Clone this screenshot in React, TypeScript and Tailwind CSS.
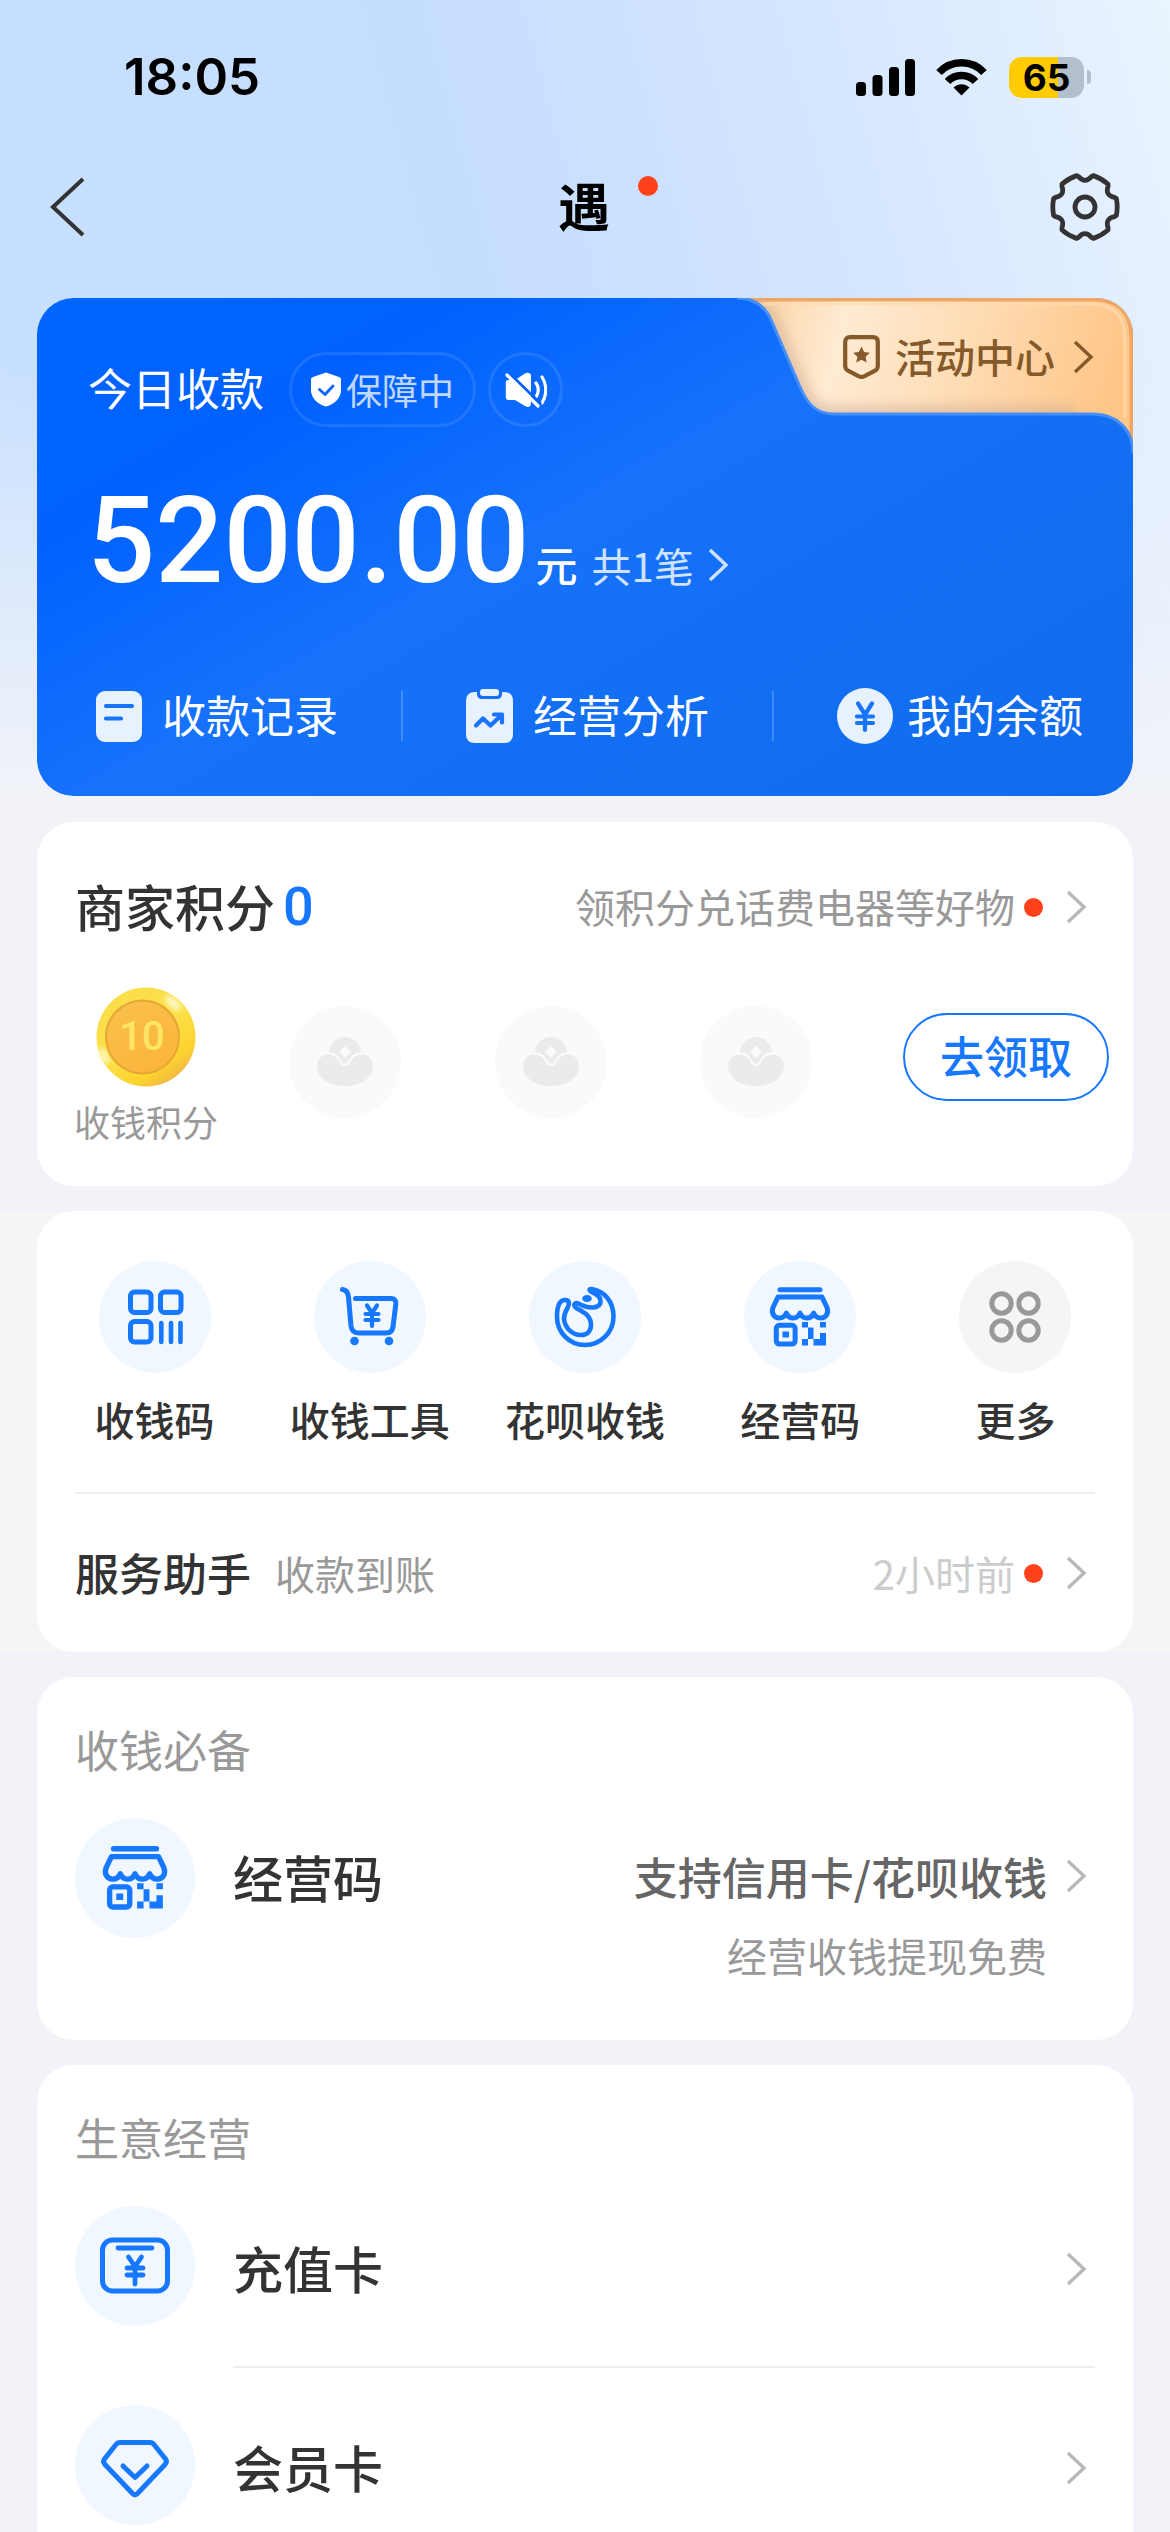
import React from "react";

type IconProps = { className?: string };

const Chevron = ({ className = "text-[#b8b8b8]" }: IconProps) => (
  <svg className={`h-[34px] w-[21px] shrink-0 ${className}`} viewBox="0 0 21 34" fill="none" aria-hidden="true">
    <path d="M2 2L18 17L2 32" stroke="currentColor" strokeWidth="3.4" />
  </svg>
);

const RedDot = () => <span className="size-[19px] shrink-0 rounded-full bg-[#ff411c]" />;

const SignalIcon = () => (
  <svg className="h-[38px] w-[60px]" viewBox="0 0 60 38" aria-label="信号">
    <rect x="0" y="24" width="10" height="14" rx="3.5" />
    <rect x="16.5" y="17" width="10" height="21" rx="3.5" />
    <rect x="33" y="9" width="10" height="29" rx="3.5" />
    <rect x="49" y="1" width="10" height="37" rx="3.5" />
  </svg>
);

const WifiIcon = () => (
  <svg className="h-[38px] w-[51px]" viewBox="0 0 51 38" fill="none" aria-label="无线网络">
    <path d="M3 14.5C15 1.5 36 1.5 48 14.5" stroke="#000" strokeWidth="7.6" />
    <path d="M11.5 23.5C19 15.5 32 15.5 39.5 23.5" stroke="#000" strokeWidth="7.6" />
    <path d="M25.5 37.5L17.5 29.5C22 25 29 25 33.5 29.5Z" fill="#000" />
  </svg>
);

const gearPath = (() => {
  const pt = (r: number, deg: number) => {
    const a = (deg * Math.PI) / 180;
    return `${(35 + r * Math.cos(a)).toFixed(2)} ${(35 + r * Math.sin(a)).toFixed(2)}`;
  };
  let d = `M${pt(32.5, -15)}`;
  for (let k = 0; k < 6; k++) {
    const a = k * 60;
    d += `Q${pt(33, a)} ${pt(32.5, a + 15)}L${pt(31, a + 18)}Q${pt(23, a + 30)} ${pt(31, a + 42)}L${pt(32.5, a + 45)}`;
  }
  return d + "Z";
})();

const GearIcon = () => (
  <svg className="size-[70px]" viewBox="0 0 70 70" fill="none" stroke="#333" strokeWidth="4.8" strokeLinejoin="round" aria-hidden="true">
    <path d={gearPath} />
    <circle cx="35" cy="35" r="10" />
  </svg>
);

const ShieldCheck = () => (
  <svg className="h-[35px] w-[30px]" viewBox="0 0 30 35" fill="none" aria-hidden="true">
    <path d="M15 0.5L28 5C29.4 5.5 30 6.2 30 7.5V18C30 26 24 32 15 34.5C6 32 0 26 0 18V7.5C0 6.2 .6 5.500 2 5Z" fill="#fff" />
    <path d="M8.500 17.500L14 22.500L22 14" stroke="#1066ff" strokeWidth="3" strokeLinecap="round" strokeLinejoin="round" />
  </svg>
);

const MutedIcon = () => (
  <svg className="h-[36px] w-[42px]" viewBox="0 0 42 36" fill="none" aria-hidden="true">
    <path d="M3 8H10L20 1.500C23 0 26 1 26 4V31C26 35 23 36 20 34L10 28H3.500Q.8 28 .8 25V10Q.8 8 3 8Z" fill="#fff" />
    <path d="M31 11C34 15 34 21 31 25M37 5C42 13 42 23 37 31" stroke="#fff" strokeWidth="3.200" strokeLinecap="round" />
    <path d="M4 1L36 32" stroke="#0863ff" strokeWidth="3" />
    <path d="M2 3L33 34" stroke="#fff" strokeWidth="3.200" strokeLinecap="round" />
  </svg>
);

const BadgeIcon = () => (
  <svg className="h-[44px] w-[37px]" viewBox="0 0 37 44" fill="none" aria-hidden="true">
    <path d="M7 2.200H30Q34.800 2.200 34.800 7V31Q34.800 34 32 35.700L21.500 41.200Q18.500 42.700 15.500 41.200L5 35.700Q2.200 34 2.200 31V7Q2.200 2.200 7 2.200Z" stroke="#855a2b" strokeWidth="4.200" />
    <path d="M18.500 11.500L21.100 17L26.800 17.700L22.600 21.700L23.700 27.600L18.500 24.700L13.300 27.600L14.400 21.700L10.200 17.700L15.900 17Z" fill="#855a2b" />
  </svg>
);

const RecordIcon = () => (
  <svg className="h-[51px] w-[46px]" viewBox="0 0 46 51" fill="none" aria-hidden="true">
    <rect width="46" height="51" rx="9" fill="#e8f2ff" />
    <path d="M10 15H36M10 27.500H25" stroke="#1874f8" strokeWidth="4.200" strokeLinecap="round" />
  </svg>
);

const AnalysisIcon = () => (
  <svg className="h-[54px] w-[47px]" viewBox="0 0 47 54" fill="none" aria-hidden="true">
    <path d="M9 3H11V5Q11 10 16 10H31Q36 10 36 5V3H38Q47 3 47 12V45Q47 54 38 54H9Q0 54 0 45V12Q0 3 9 3Z" fill="#e8f2ff" />
    <rect x="14" y="0" width="19" height="7" rx="3" fill="#e8f2ff" />
    <path d="M10 36.500L17 29.500L24.500 36.500L35.500 26M28 25.500H36V33.500" stroke="#1874f8" strokeWidth="4.200" strokeLinecap="round" strokeLinejoin="round" />
  </svg>
);

const BalanceIcon = () => (
  <svg className="size-[56px]" viewBox="0 0 56 56" fill="none" aria-hidden="true">
    <circle cx="28" cy="28" r="28" fill="#e8f2ff" />
    <path d="M21 15.500L28 26.500L35 15.500M20 28.500H36M20 35H36M28 27V42" stroke="#1874f8" strokeWidth="4.200" strokeLinecap="round" strokeLinejoin="round" />
  </svg>
);

const Coin = () => (
  <span className="relative grid size-[100px] place-items-center">
    <svg className="absolute inset-0 size-full" viewBox="0 0 100 100" aria-hidden="true">
      <defs>
        <linearGradient id="rim" x1="0.1" y1="0" x2="0.8" y2="1">
          <stop offset="0" stopColor="#f9dc4a" />
          <stop offset="0.5" stopColor="#fde14a" />
          <stop offset="0.8" stopColor="#fcd32f" />
          <stop offset="1" stopColor="#efac4c" />
        </linearGradient>
        <linearGradient id="face" x1="0" y1="0" x2="0.6" y2="1">
          <stop offset="0" stopColor="#f9c14d" />
          <stop offset="1" stopColor="#fbb53c" />
        </linearGradient>
        <filter id="soft" x="-50%" y="-50%" width="200%" height="200%">
          <feGaussianBlur stdDeviation="2" />
        </filter>
      </defs>
      <circle cx="50" cy="50" r="49.500" fill="url(#rim)" />
      <ellipse cx="77" cy="16" rx="10" ry="5" transform="rotate(42 77 16)" fill="#fdf7b8" filter="url(#soft)" />
      <ellipse cx="8" cy="69" rx="9" ry="4" transform="rotate(62 8 69)" fill="#fdf7b8" filter="url(#soft)" />
      <circle cx="46.500" cy="50" r="36.500" fill="url(#face)" stroke="#e5a636" strokeWidth="2" />
    </svg>
    <span className="relative pr-[8px] font-['Roboto',sans-serif] text-[40px] font-medium leading-[40px] text-[#ffe566]">10</span>
  </span>
);

const IngotPlaceholder = () => (
  <span className="grid size-[112px] place-items-center rounded-full bg-[#fafafa]">
    <svg className="size-[112px]" viewBox="0 0 112 112" fill="none" aria-hidden="true">
      <circle cx="56" cy="47" r="16" fill="#ebebeb" />
      <path d="M41 48Q48 48 51 55Q56 62 61 55Q64 48 71 48C79 48 84 53 84 60C84 71 73 80 56 80C39 80 28 71 28 60C28 53 33 48 41 48Z" fill="#ebebeb" />
      <path d="M38 47.500Q47 47 50.500 54Q56 64 61.500 54Q65 47 74 47.500" stroke="#fafafa" strokeWidth="2.500" />
      <path d="M56 40L62 46L56 52L50 46Z" fill="#fafafa" />
    </svg>
  </span>
);

const QrIcon = () => (
  <>
    <rect x="31.500" y="31" width="20.500" height="20.500" rx="4" />
    <rect x="61.500" y="31" width="20.500" height="20.500" rx="4" />
    <rect x="31.500" y="60.500" width="20.500" height="20.500" rx="4" />
    <path d="M62.300 62V81M72 62V81M81.500 62V81" strokeWidth="4.600" />
  </>
);

const CartIcon = () => (
  <>
    <path d="M28.500 28.500Q34 29.500 34.500 36L37 65Q38 72 44.500 72H72Q78 72 79 66L81.800 43Q82.200 37.500 77 37.500H41.500" />
    <circle cx="40.500" cy="80" r="4.300" fill="currentColor" stroke="none" />
    <circle cx="75" cy="80" r="4.300" fill="currentColor" stroke="none" />
    <path d="M53 44.500L58 52L63 44.500M51.500 53H64.500M51.500 59H64.500M58 53V65" strokeWidth="4.200" />
  </>
);

const HuabeiIcon = () => (
  <>
    <path d="M62.500 28C75 30 84.500 40 84.500 55.500A28.500 28.500 0 0 1 56 84C40 84 28 71 28 56C28 45 31 39 36 39C41 39 40.500 43 38.500 47C35.500 52 35 55 35 58C36 67 43 74 52 74C58 74 62 70 62 64C62 54 54 51 48 47.500C43 44 46 41 49.500 42.500C54 45 59 47 64 46.500C70 46 72 43 71.500 39.500C71 35 67 33 62.500 31C60 29.500 60 28 62.500 28Z" strokeWidth="4.600" />
    <ellipse cx="58" cy="37.500" rx="4.800" ry="3.600" fill="currentColor" stroke="none" />
  </>
);

const ShopIcon = () => (
  <>
    <path d="M36 28.700H76" />
    <path d="M34 36H78L83 46.500C85 52 82 57 77 57C73.500 57 71 55.500 69.700 52C68.300 55.500 66 57 63 57C59.500 57 57.300 55.500 56 52C54.700 55.500 52.500 57 49 57C46 57 43.700 55.500 42.300 52C41 55.500 38.500 57 35 57C30 57 27 52 29 46.500Z" />
    <rect x="32.300" y="64.300" width="18.800" height="18.800" rx="3" />
    <path d="M38.500 70.500H45V76.500H38.500ZM58 61H64V66.500H58ZM64 66.500H69.500V78H64ZM58 78H64V84.500H58ZM76 61H82V66.500H76ZM76 72H82V84.500H69.500V78H76Z" fill="currentColor" stroke="none" />
  </>
);

const MoreIcon = () => (
  <>
    <circle cx="42.500" cy="42.500" r="9.700" />
    <circle cx="69.500" cy="42.500" r="9.700" />
    <circle cx="42.500" cy="69.500" r="9.700" />
    <circle cx="69.500" cy="69.500" r="9.700" />
  </>
);

const TopUpIcon = () => (
  <>
    <rect x="27.500" y="34" width="65" height="51" rx="10" />
    <path d="M43 42H77M53.500 51L60 60.500L66.500 51M52 62H68M52 69H68M60 62V78" strokeWidth="4.800" />
  </>
);

const MemberIcon = () => (
  <>
    <path d="M45 37.500H75Q77.500 37.500 79 39.500L90.500 54Q92.500 57 90 59.500L62.500 88.500Q60 91 57.500 88.500L30 59.500Q27.500 57 29.500 54L41 39.500Q42.500 37.500 45 37.500Z" />
    <path d="M48 61L60 72.500L72 61" />
  </>
);

function RoundIcon({ children, size, box, muted }: { children: React.ReactNode; size: string; box: number; muted?: boolean }) {
  return (
    <span className={`shrink-0 rounded-full ${size} ${muted ? "bg-[#f5f5f5] text-[#999]" : "bg-[#f0f7ff] text-[#1677ff]"}`}>
      <svg className="size-full" viewBox={`0 0 ${box} ${box}`} fill="none" stroke="currentColor" strokeWidth="5" strokeLinecap="round" strokeLinejoin="round" aria-hidden="true">
        {children}
      </svg>
    </span>
  );
}

function StatusBar() {
  return (
    <div className="flex h-[154px] items-center justify-between pl-[124px] pr-[79px]">
      <time className="font-['Inter',sans-serif] text-[51px] font-semibold leading-[60px] text-black">18:05</time>
      <div className="flex items-center">
        <SignalIcon />
        <span className="ml-[20px]"><WifiIcon /></span>
        <span className="ml-[22px] grid h-[41px] w-[75px] place-items-center rounded-[13px] bg-[linear-gradient(90deg,#ffcc02_65%,#b4bfcc_65%)] font-['Inter',sans-serif] text-[37px] font-bold leading-[41px] text-black">
          65
        </span>
        <span className="ml-[3px] h-[14px] w-[4px] rounded-r-full bg-[#b4bfcc]" />
      </div>
    </div>
  );
}

function NavBar() {
  return (
    <header className="grid h-[106px] grid-cols-[1fr_auto_1fr] items-center pl-[48px] pr-[50px]">
      <button aria-label="返回" className="justify-self-start">
        <svg className="h-[60px] w-[38px]" viewBox="0 0 38 60" fill="none">
          <path d="M35 2L5 30L35 58" stroke="#333" strokeWidth="4" />
        </svg>
      </button>
      <h1 className="relative pb-[4px] text-[52px] font-bold leading-[64px] text-black">
        遇
        <span className="absolute -right-[48px] top-[3px] size-[20px] rounded-full bg-[#ff411c]" />
      </h1>
      <button aria-label="设置" className="justify-self-end"><GearIcon /></button>
    </header>
  );
}

function ActivityTab() {
  return (
    <a href="#activity" className="absolute right-0 top-0 h-[160px] w-[396px] text-[#855a2b]">
      <svg className="absolute inset-0 size-full" viewBox="0 0 396 160" fill="none" aria-hidden="true">
        <defs>
          <linearGradient id="gold" x1="0" y1="0" x2="1" y2="0.1">
            <stop offset="0" stopColor="#f9cf9c" />
            <stop offset="0.28" stopColor="#ffebd3" />
            <stop offset="0.55" stopColor="#fedfba" />
            <stop offset="1" stopColor="#ffc688" />
          </linearGradient>
          <clipPath id="tab">
            <path d="M0 0C18 0 29 9 35 24L63 89C70 105 78 116 98 116H356C380 116 396 132 396 155V0Z" />
          </clipPath>
          <filter id="edge" x="-10%" y="-20%" width="120%" height="140%">
            <feGaussianBlur stdDeviation="7" />
          </filter>
        </defs>
        <g clipPath="url(#tab)">
          <rect width="396" height="160" fill="url(#gold)" />
          <path d="M0 0C18 0 29 9 35 24L63 89C70 105 78 116 98 116H340" stroke="#c9a790" strokeOpacity="0.6" strokeWidth="14" filter="url(#edge)" />
          <path d="M-10 1.500H356Q394.500 1.500 394.500 40V170" stroke="#efa564" strokeWidth="4" />
          <path d="M20 6H354Q388 6 388 42V120" stroke="#ffdcb0" strokeOpacity="0.7" strokeWidth="3" />
        </g>
        <path d="M0 0C18 0 29 9 35 24L63 89C70 105 78 116 98 116H356C380 116 396 132 396 155" stroke="#468ffb" strokeWidth="3" />
      </svg>
      <span className="relative flex h-[118px] items-center justify-end pr-[39px]">
        <BadgeIcon />
        <span className="ml-[15px] mr-[18px] pb-[2px] text-[40px] font-medium leading-[60px]">活动中心</span>
        <Chevron className="text-[#855a2b]" />
      </span>
    </a>
  );
}

function BalanceLink({ icon, label }: { icon: React.ReactNode; label: string }) {
  return (
    <a href="#detail" className="flex h-[56px] items-center text-[44px] leading-[56px] text-white">
      {icon}
      <span className="pb-[4px]">{label}</span>
    </a>
  );
}

function SummaryCard() {
  return (
    <section className="relative mx-[37px] mt-[38px] overflow-hidden rounded-[37px] bg-[linear-gradient(150deg,#0066ff_0%,#0061ff_22%,#1672fb_46%,#126ff3_70%,#116bee_100%)] pb-[52px] pt-[54px] text-white">
      <ActivityTab />
      <div className="flex items-center pl-[51px]">
        <h2 className="pb-[6px] text-[44px] leading-[60px]">今日收款</h2>
        <button className="ml-[25px] flex h-[75px] items-center gap-[5px] rounded-full border-[3px] border-white/10 px-[19px] text-[36px] leading-[60px] text-white/75">
          <ShieldCheck />
          <span className="pb-[2px]">保障中</span>
        </button>
        <button aria-label="语音播报已关闭" className="ml-[12px] grid size-[75px] place-items-center rounded-full border-[3px] border-white/10">
          <MutedIcon />
        </button>
      </div>
      <div className="mt-[54px] flex items-baseline pl-[50px]">
        <span className="font-['Roboto',sans-serif] text-[120px] font-medium leading-[120px]">5200.00</span>
        <span className="ml-[6px] text-[42px] font-medium leading-[56px]">元</span>
        <a href="#orders" className="ml-[14px] flex items-center gap-[14px] text-[40px] leading-[56px] text-white/80">
          共1笔
          <Chevron className="text-white/80" />
        </a>
      </div>
      <nav className="mt-[87px] flex items-center justify-between pl-[59px] pr-[50px]">
        <BalanceLink icon={<span className="mr-[20px]"><RecordIcon /></span>} label="收款记录" />
        <span className="h-[50px] w-[2px] bg-white/20" />
        <BalanceLink icon={<span className="mr-[20px]"><AnalysisIcon /></span>} label="经营分析" />
        <span className="h-[50px] w-[2px] bg-white/20" />
        <BalanceLink icon={<span className="mr-[14px]"><BalanceIcon /></span>} label="我的余额" />
      </nav>
    </section>
  );
}

function PointsCard() {
  return (
    <section className="mx-[37px] mt-[26px] rounded-[37px] bg-white pb-[37px] pt-[55px]">
      <div className="flex h-[60px] items-center pl-[38px] pr-[46px]">
        <h2 className="flex items-center text-[50px] font-medium leading-[60px] text-[#333]">
          <span className="pb-[4px]">商家积分</span>
          <span className="ml-[8px] font-['Roboto',sans-serif] text-[54px] font-medium text-[#1677ff]">0</span>
        </h2>
        <a href="#points" className="ml-auto flex items-center text-[40px] leading-[60px] text-[#999]">
          <span className="pb-[2px]">领积分兑话费电器等好物</span>
          <span className="ml-[9px] mr-[23px] flex"><RedDot /></span>
          <Chevron />
        </a>
      </div>
      <div className="mt-[50px] flex items-start pl-[37px] pr-[24px]">
        <div className="flex w-[144px] flex-col items-center">
          <Coin />
          <span className="mt-[6px] text-[36px] leading-[56px] text-[#999]">收钱积分</span>
        </div>
        <div className="ml-[71px] mr-[91px] mt-[19px] flex flex-1 justify-between">
          <IngotPlaceholder />
          <IngotPlaceholder />
          <IngotPlaceholder />
        </div>
        <button className="mt-[26px] h-[88px] w-[206px] rounded-full border-2 border-[#1677ff] pb-[4px] text-[44px] font-medium leading-[60px] text-[#1677ff]">
          去领取
        </button>
      </div>
    </section>
  );
}

const shortcuts = [
  { label: "收钱码", icon: <QrIcon /> },
  { label: "收钱工具", icon: <CartIcon /> },
  { label: "花呗收钱", icon: <HuabeiIcon /> },
  { label: "经营码", icon: <ShopIcon /> },
  { label: "更多", icon: <MoreIcon />, muted: true },
];

function ShortcutsCard() {
  return (
    <div className="mt-[25px] bg-[#f5f5f5] px-[37px]">
      <section className="rounded-[37px] bg-white pt-[50px]">
        <nav className="grid grid-cols-5 px-[10px]">
          {shortcuts.map((s) => (
            <a key={s.label} href="#tool" className="flex flex-col items-center">
              <RoundIcon size="size-[112px]" box={112} muted={s.muted}>{s.icon}</RoundIcon>
              <span className="mt-[16px] text-[40px] font-medium leading-[60px] text-[#333]">{s.label}</span>
            </a>
          ))}
        </nav>
        <a href="#assistant" className="mx-[38px] mt-[43px] flex h-[160px] items-center border-t-2 border-[#eee] pr-[8px]">
          <span className="pb-[2px] text-[44px] font-medium leading-[60px] text-[#333]">服务助手</span>
          <span className="ml-[24px] text-[40px] leading-[60px] text-[#999]">收款到账</span>
          <span className="ml-auto text-[40px] leading-[60px] text-[#ccc]">2小时前</span>
          <span className="ml-[9px] mr-[23px] flex"><RedDot /></span>
          <Chevron />
        </a>
      </section>
    </div>
  );
}

function EssentialsCard() {
  return (
    <section className="mx-[37px] mt-[25px] rounded-[37px] bg-white pb-[55px] pl-[38px] pr-[46px] pt-[42px]">
      <h2 className="text-[44px] leading-[60px] text-[#999]">收钱必备</h2>
      <a href="#code" className="mt-[39px] flex items-start">
        <RoundIcon size="size-[120px]" box={112}><ShopIcon /></RoundIcon>
        <span className="ml-[38px] text-[50px] font-medium leading-[116px] text-[#333]">经营码</span>
        <span className="ml-auto flex flex-col items-end text-right">
          <span className="text-[44px] font-medium leading-[116px] text-[#666]">支持信用卡/花呗收钱</span>
          <span className="-mt-[9px] text-[40px] leading-[60px] text-[#999]">经营收钱提现免费</span>
        </span>
        <span className="ml-[19px] flex h-[116px] items-center"><Chevron /></span>
      </a>
    </section>
  );
}

function BusinessCard() {
  return (
    <section className="mx-[37px] mt-[25px] rounded-[37px] bg-white pb-[40px] pl-[38px] pt-[42px]">
      <h2 className="text-[44px] leading-[60px] text-[#999]">生意经营</h2>
      <a href="#topup" className="mt-[39px] flex items-start">
        <RoundIcon size="size-[120px]" box={120}><TopUpIcon /></RoundIcon>
        <span className="ml-[38px] mr-[38px] flex h-[162px] flex-1 items-start justify-between border-b-2 border-[#eee] pr-[8px]">
          <span className="text-[50px] font-medium leading-[122px] text-[#333]">充值卡</span>
          <span className="flex h-[126px] items-center"><Chevron /></span>
        </span>
      </a>
      <a href="#member" className="mt-[37px] flex items-start pr-[46px]">
        <RoundIcon size="size-[120px]" box={120}><MemberIcon /></RoundIcon>
        <span className="ml-[38px] flex-1 text-[50px] font-medium leading-[122px] text-[#333]">会员卡</span>
        <span className="flex h-[126px] items-center"><Chevron /></span>
      </a>
    </section>
  );
}

export default function App() {
  return (
    <main className="h-screen overflow-y-auto bg-[#f1f3f8] bg-[linear-gradient(180deg,rgba(241,243,248,0)_45%,#f1f3f8_97%),linear-gradient(75deg,#c9e1ff_0%,#c5ddff_45%,#d3e5ff_72%,#eaf4ff_100%)] bg-[length:100%_820px] bg-no-repeat font-['Noto_Sans_CJK_SC',sans-serif] [scrollbar-width:none]">
      <StatusBar />
      <NavBar />
      <SummaryCard />
      <PointsCard />
      <ShortcutsCard />
      <EssentialsCard />
      <BusinessCard />
    </main>
  );
}
